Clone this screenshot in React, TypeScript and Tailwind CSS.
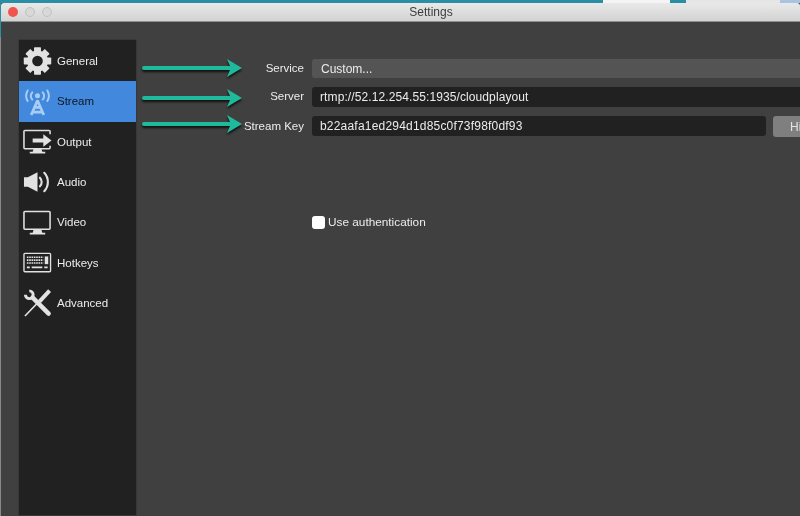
import React from 'react';

const Gear = () => (
  <svg width="30" height="30" viewBox="0 0 30 30">
    <g fill="#e2e2e2">
      {[0, 45, 90, 135, 180, 225, 270, 315].map((a) => (
        <rect key={a} x="11.4" y="0.8" width="7.2" height="6" rx="0.8" transform={`rotate(${a} 15 15)`} />
      ))}
    </g>
    <circle cx="15" cy="15" r="8.2" fill="none" stroke="#e2e2e2" strokeWidth="5.4" />
  </svg>
);

const Tower = () => (
  <svg width="30" height="30" viewBox="0 0 30 30" fill="none" stroke="#a9cdf2" strokeLinecap="round">
    <circle cx="15" cy="8.5" r="2.6" fill="#a9cdf2" stroke="none" />
    <path d="M9.6 5a6 6 0 0 0 0 7.5M20.4 5a6 6 0 0 1 0 7.5" strokeWidth="2" />
    <path d="M4.8 3a11 11 0 0 0 0 11M25.2 3a11 11 0 0 1 0 11" strokeWidth="2" />
    <path d="M15 13.5 8.5 28.5M15 13.5l6.5 15M11.5 20.5h7M10 25.5h10" strokeWidth="2.8" strokeLinecap="butt" />
  </svg>
);

const OutputIcon = () => (
  <svg width="30" height="26" viewBox="0 0 30 26" fill="none">
    <path d="M28 5V2a1 1 0 0 0-1-1H2a1 1 0 0 0-1 1v17a1 1 0 0 0 1 1h25a1 1 0 0 0 1-1v-2" stroke="#e2e2e2" strokeWidth="1.6" />
    <path d="M11 20h8l1 3h3v2H7v-2h3z" fill="#e2e2e2" />
    <path d="M10 9.5h11V5l8.5 6.5L21 18v-4.5H10z" fill="#e2e2e2" />
  </svg>
);

const Speaker = () => (
  <svg width="30" height="26" viewBox="0 0 30 26" fill="none">
    <path d="M1 8h4l10-5v20L5 18H1z" fill="#e2e2e2" />
    <path d="M17.5 8.5a6.5 6.5 0 0 1 0 9" stroke="#e2e2e2" strokeWidth="2.2" strokeLinecap="round" />
    <path d="M22 3.5a14 14 0 0 1 0 19" stroke="#e2e2e2" strokeWidth="2.2" strokeLinecap="round" />
  </svg>
);

const Monitor = () => (
  <svg width="30" height="26" viewBox="0 0 30 26" fill="none">
    <rect x="1" y="1" width="27" height="18.5" rx="1" stroke="#e2e2e2" strokeWidth="1.6" />
    <path d="M11 20h8l1 3h3v2H7v-2h3z" fill="#e2e2e2" />
  </svg>
);

const Keyboard = () => (
  <svg width="30" height="22" viewBox="0 0 30 22" fill="none">
    <rect x="1" y="1" width="27.5" height="19" rx="1" stroke="#e2e2e2" strokeWidth="1.4" />
    <path d="M4 5h17M4 8h17M4 11h17" stroke="#e2e2e2" strokeWidth="1.7" strokeDasharray="1.7 0.7" />
    <rect x="22.5" y="4.2" width="3.6" height="8" fill="#e2e2e2" />
    <path d="M4 15.5h3M9 15.5h11M22 15.5h3.5" stroke="#e2e2e2" strokeWidth="2" />
  </svg>
);

const Tools = () => (
  <svg width="30" height="30" viewBox="0 0 30 30" fill="none" stroke="#e2e2e2">
    <path d="M6.5 2.5A4 4 0 1 1 2.5 6.5" strokeWidth="3" />
    <path d="M10 9.5 26.5 26" strokeWidth="4.6" strokeLinecap="round" />
    <path d="M26 .8 29 3.6 18.5 15 15.5 12.2z" fill="#e2e2e2" stroke="none" />
    <path d="M16.5 13.5 2 28.5" strokeWidth="1.7" />
  </svg>
);

const items = [
  { label: 'General', icon: <Gear /> },
  { label: 'Stream', icon: <Tower />, active: true },
  { label: 'Output', icon: <OutputIcon /> },
  { label: 'Audio', icon: <Speaker /> },
  { label: 'Video', icon: <Monitor /> },
  { label: 'Hotkeys', icon: <Keyboard /> },
  { label: 'Advanced', icon: <Tools /> },
];

const Arrow = ({ className }: { className: string }) => (
  <svg
    width="104"
    height="22"
    viewBox="0 0 104 22"
    className={`absolute left-[141px] drop-shadow-[0_2px_1px_rgba(0,0,0,0.75)] ${className}`}
  >
    <path d="M3 8h86L86 1l15 9-15 9 3-7H3a2 2 0 0 1 0-4z" fill="#1fb99c" />
  </svg>
);

export default function App() {
  return (
    <div className="relative flex h-[516px] w-[800px] flex-col overflow-hidden bg-[#404040] font-['Liberation_Sans',sans-serif] text-[11.5px] text-[#ececec] blur-[0.35px]">
      <div className="flex h-[3px] shrink-0 bg-[#2a8ea5]">
        <div className="w-[603px]" />
        <div className="w-[67px] bg-[#f4f4f4]" />
        <div className="w-[16px]" />
        <div className="w-[94px] bg-[#e6e6e6]" />
        <div className="w-[20px] bg-[#a8c4e0]" />
      </div>
      <div className="flex min-h-0 flex-1">
        <div className="flex w-px shrink-0 flex-col bg-[#8a8a8a]">
          <div className="h-[34px] bg-[#2a8ea5]" />
        </div>
        <div className="flex min-w-0 flex-1 flex-col">
          <div className="flex h-[19px] shrink-0 items-center rounded-t-[3px] border-b border-[#8f8f8f] bg-gradient-to-b from-[#e9e9e9] to-[#d3d3d3] pl-[7px]">
            <div className="flex gap-[7px]">
              <span className="size-[10px] rounded-full bg-[#f0544c]" />
              <span className="size-[10px] rounded-full border border-[#c2c2c2] bg-[#d8d8d8]" />
              <span className="size-[10px] rounded-full border border-[#c2c2c2] bg-[#d8d8d8]" />
            </div>
            <span className="flex-1 pl-[10px] text-center text-[12px] text-[#3c3c3c]">Settings</span>
          </div>
          <div className="flex min-h-0 flex-1 pl-[17px] pt-[17px]">
            <nav className="flex w-[119px] shrink-0 flex-col border border-[#383838] bg-[#212121] pt-px">
              {items.map((it) => (
                <div
                  key={it.label}
                  className={`flex h-[40.35px] items-center gap-[5px] pl-[4px] ${it.active ? 'bg-[#4289de] text-[#10151c]' : ''}`}
                >
                  <span className="flex w-[29px] justify-center">{it.icon}</span>
                  <span className="pt-px">{it.label}</span>
                </div>
              ))}
            </nav>
            <main className="min-w-0 flex-1 pl-[6px] pt-[20px]">
              <div className="grid grid-cols-[161px_1fr] items-center gap-x-[8px] gap-y-[9px]">
                <span className="text-right">Service</span>
                <div className="flex h-[19px] items-center rounded-[3px] bg-[#545454] pl-[9px] text-[12px]">Custom...</div>
                <span className="text-right">Server</span>
                <div className="flex h-[20px] items-center rounded-[3px] bg-[#212121] pl-[8px] text-[12px] tracking-[0.1px]">rtmp://52.12.254.55:1935/cloudplayout</div>
                <span className="text-right">Stream Key</span>
                <div className="flex items-start gap-[7px]">
                  <div className="flex h-[20px] w-[454px] shrink-0 items-center rounded-[3px] bg-[#212121] pl-[8px] text-[12px] tracking-[0.2px]">b22aafa1ed294d1d85c0f73f98f0df93</div>
                  <button className="h-[21px] w-[60px] shrink-0 rounded-[3px] bg-[#7f7f7f] pl-[17px] text-left text-[12px] text-[#e4e4e4]">Hide</button>
                </div>
              </div>
              <label className="ml-[169px] mt-[77px] flex items-center gap-[3px]">
                <span className="size-[13px] rounded-[3px] bg-white" />
                <span className="text-[11.8px]">Use authentication</span>
              </label>
            </main>
          </div>
        </div>
      </div>
      {/* annotation arrows drawn over the screenshot */}
      <Arrow className="top-[58px]" />
      <Arrow className="top-[88px]" />
      <Arrow className="top-[114px]" />
    </div>
  );
}
